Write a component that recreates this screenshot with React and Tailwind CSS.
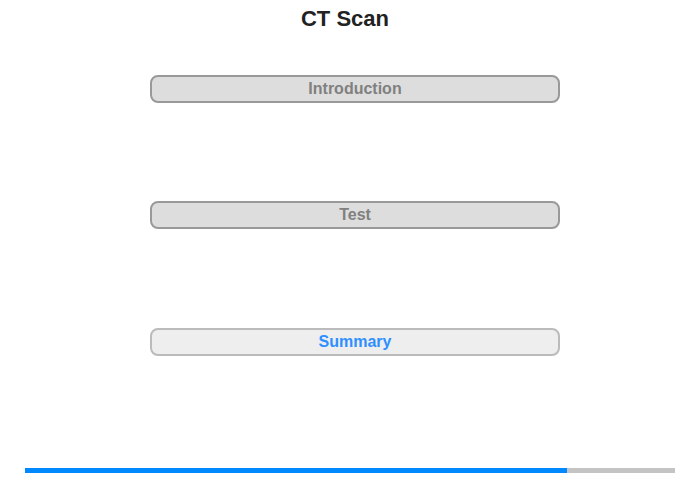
export default function App() {
  const btn = "w-[410px] h-[28px] rounded-[8px] border-2 flex items-center justify-center text-[16px] font-bold leading-none";
  return (
    <div className="w-[700px] h-[480px] bg-white flex flex-col items-center" style={{ fontFamily: '"Liberation Sans", Arial, sans-serif' }}>
      <div className="h-[38px] pt-[6px] mr-[10px] text-[22px] leading-[26px] font-bold text-[#222222]">CT Scan</div>
      <div className="mt-[37px] ml-[10px] flex flex-col gap-[98px] items-center">
        <div className={btn + " bg-[#dddddd] border-[#999999] text-[#808080]"}>Introduction</div>
        <div className={btn + " bg-[#dddddd] border-[#999999] text-[#808080]"}>Test</div>
        <div className={btn + " mt-[1px] bg-[#eeeeee] border-[#bbbbbb] text-[#2f8fff]"}>Summary</div>
      </div>
      <div className="mt-[112px] w-[650px] h-[5px] bg-[#c4c4c4] flex">
        <div className="w-[542px] h-full bg-[#0088ff]"></div>
      </div>
    </div>
  );
}
